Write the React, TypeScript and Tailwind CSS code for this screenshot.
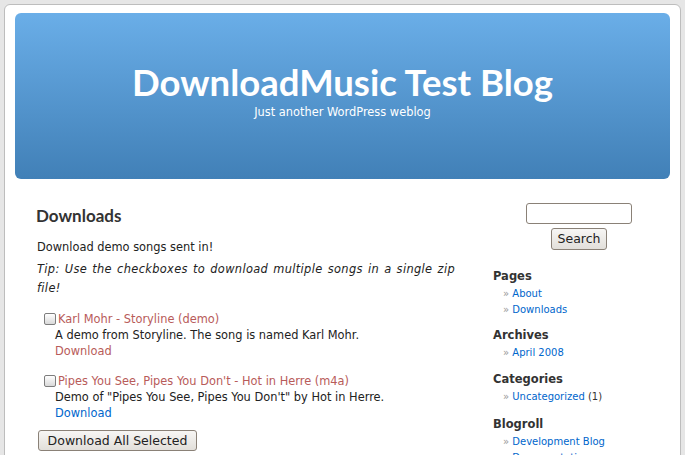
const body = { fontFamily: '"DejaVu Sans", Verdana, sans-serif' };
const head = { fontFamily: 'Lato, "Open Sans", sans-serif' };

function Box() {
  return (
    <span className="inline-block w-[12px] h-[12px] rounded-[2px] border border-[#7d7d7d] bg-gradient-to-b from-[#ffffff] to-[#d9d9d9] shrink-0" />
  );
}

function Song({ title, desc, visited }: { title: string; desc: string; visited?: boolean }) {
  return (
    <div className="text-[11.4px] leading-[16px]">
      <div className="flex items-center ml-[8px]">
        <Box />
        <a className="ml-[2px] text-[#b85b5a]">{title}</a>
      </div>
      <div className="ml-[19px] text-[#222]">{desc}</div>
      <a className={"block ml-[19px] " + (visited ? "text-[#b85b5a]" : "text-[#0066cc]")}>Download</a>
    </div>
  );
}

function Section({ title, items, className }: { title: string; items: React.ReactNode[]; className: string }) {
  return (
    <div className={className}>
      <h2 className="text-[11.5px] font-bold leading-[16px] text-[#333]">{title}</h2>
      <ul className="mt-[2px]">
        {items.map((it, i) => (
          <li key={i} className="text-[10px] leading-[16px] pl-[10px]">
            <span className="text-[#999]">» </span>
            {it}
          </li>
        ))}
      </ul>
    </div>
  );
}

export default function App() {
  return (
    <div className="h-[455px] overflow-hidden bg-[#e6e6e6] pt-[4px] pl-[4px]" style={body}>
      <div className="w-[677px] h-[470px] bg-white border border-[#bdbdbd] rounded-t-[6px]">
        {/* header */}
        <header className="mx-[10px] mt-[8px] h-[166px] rounded-[6px] bg-gradient-to-b from-[#6aaee8] to-[#4180b7] flex flex-col items-center text-white">
          <h1 className="mt-[48px] text-[36.5px] font-bold leading-[43px]" style={head}>
            DownloadMusic Test Blog
          </h1>
          <p className="mt-[1px] text-[11.4px] leading-[14px]">Just another WordPress weblog</p>
        </header>

        <div className="flex">
          {/* content */}
          <main className="pl-[31px] w-[460px]">
            <h2 className="mt-[27px] text-[17px] font-bold leading-[20px] text-[#333]" style={head}>
              Downloads
            </h2>
            <p className="mt-[12px] ml-[1px] text-[11.4px] leading-[19px] text-[#222]">
              Download demo songs sent in!
            </p>
            <p className="mt-[3px] ml-[1px] text-[11.4px] leading-[19px] text-[#222] italic text-justify tracking-[0.35px] w-[418px]">
              Tip: Use the checkboxes to download multiple songs in a single zip file!
            </p>
            <div className="mt-[13px]">
              <Song
                title="Karl Mohr - Storyline (demo)"
                desc="A demo from Storyline. The song is named Karl Mohr."
                visited
              />
            </div>
            <div className="mt-[14px]">
              <Song
                title="Pipes You See, Pipes You Don't - Hot in Herre (m4a)"
                desc={'Demo of "Pipes You See, Pipes You Don\'t" by Hot in Herre.'}
              />
            </div>
            <button className="mt-[9px] ml-[2px] h-[21px] w-[159px] rounded-[3px] border border-[#8a8177] bg-gradient-to-b from-[#f7f6f4] to-[#e2dfda] text-[12.5px] text-[#222] leading-[19px]">
              Download All Selected
            </button>
          </main>

          {/* sidebar */}
          <aside className="ml-[28px] w-[172px]">
            <div className="mt-[24px] flex flex-col items-center">
              <input className="w-[106px] h-[21px] rounded-[3px] border border-[#8a8177] bg-white" />
              <button className="mt-[4px] w-[56px] h-[22px] rounded-[3px] border border-[#8a8177] bg-gradient-to-b from-[#f7f6f4] to-[#e2dfda] text-[12.5px] text-[#222] leading-[20px]">
                Search
              </button>
            </div>
            <Section
              className="mt-[18px]"
              title="Pages"
              items={[
                <a className="text-[#0066cc]">About</a>,
                <a className="text-[#0066cc]">Downloads</a>,
              ]}
            />
            <Section className="mt-[9px]" title="Archives" items={[<a className="text-[#0066cc]">April 2008</a>]} />
            <Section
              className="mt-[10px]"
              title="Categories"
              items={[
                <span>
                  <a className="text-[#0066cc]">Uncategorized</a>
                  <span className="text-[#333]"> (1)</span>
                </span>,
              ]}
            />
            <Section
              className="mt-[11px]"
              title="Blogroll"
              items={[
                <a className="text-[#0066cc]">Development Blog</a>,
                <a className="text-[#0066cc]">Documentation</a>,
                <a className="text-[#0066cc]">Plugins</a>,
              ]}
            />
          </aside>
        </div>
      </div>
    </div>
  );
}
